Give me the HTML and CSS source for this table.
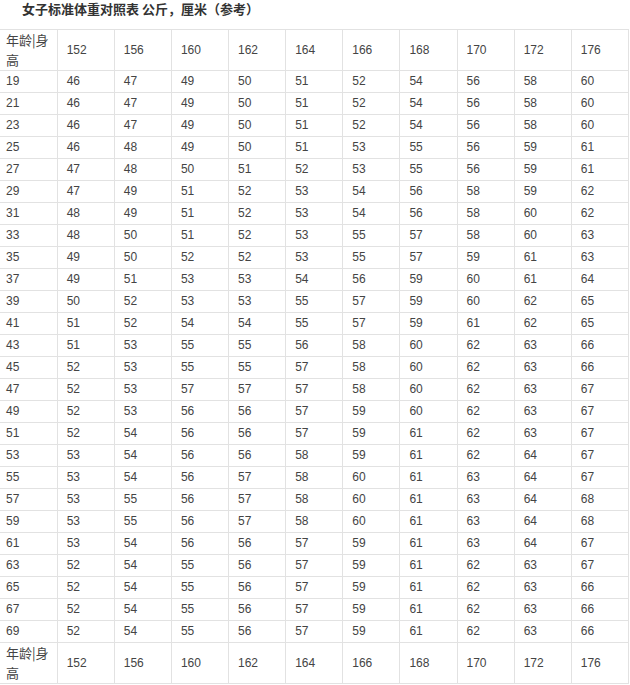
FILE: index.html
```html
<!DOCTYPE html>
<html lang="zh-CN">
<head>
<meta charset="utf-8">
<title>女子标准体重对照表</title>
<link rel="stylesheet" href="styles.css">
</head>
<body>
<div class="page">
<h1 class="title">女子标准体重对照表 公斤，厘米（参考）</h1>
<table class="chart">
<colgroup>
<col class="c"><col class="c"><col class="c"><col class="c"><col class="c"><col class="c"><col class="c"><col class="c"><col class="c"><col class="c"><col class="c">
</colgroup>
<thead>
<tr class="head"><td class="label">年龄|身高</td><td>152</td><td>156</td><td>160</td><td>162</td><td>164</td><td>166</td><td>168</td><td>170</td><td>172</td><td>176</td></tr>
</thead>
<tbody>
<tr><td>19</td><td>46</td><td>47</td><td>49</td><td>50</td><td>51</td><td>52</td><td>54</td><td>56</td><td>58</td><td>60</td></tr>
<tr><td>21</td><td>46</td><td>47</td><td>49</td><td>50</td><td>51</td><td>52</td><td>54</td><td>56</td><td>58</td><td>60</td></tr>
<tr><td>23</td><td>46</td><td>47</td><td>49</td><td>50</td><td>51</td><td>52</td><td>54</td><td>56</td><td>58</td><td>60</td></tr>
<tr><td>25</td><td>46</td><td>48</td><td>49</td><td>50</td><td>51</td><td>53</td><td>55</td><td>56</td><td>59</td><td>61</td></tr>
<tr><td>27</td><td>47</td><td>48</td><td>50</td><td>51</td><td>52</td><td>53</td><td>55</td><td>56</td><td>59</td><td>61</td></tr>
<tr><td>29</td><td>47</td><td>49</td><td>51</td><td>52</td><td>53</td><td>54</td><td>56</td><td>58</td><td>59</td><td>62</td></tr>
<tr><td>31</td><td>48</td><td>49</td><td>51</td><td>52</td><td>53</td><td>54</td><td>56</td><td>58</td><td>60</td><td>62</td></tr>
<tr><td>33</td><td>48</td><td>50</td><td>51</td><td>52</td><td>53</td><td>55</td><td>57</td><td>58</td><td>60</td><td>63</td></tr>
<tr><td>35</td><td>49</td><td>50</td><td>52</td><td>52</td><td>53</td><td>55</td><td>57</td><td>59</td><td>61</td><td>63</td></tr>
<tr><td>37</td><td>49</td><td>51</td><td>53</td><td>53</td><td>54</td><td>56</td><td>59</td><td>60</td><td>61</td><td>64</td></tr>
<tr><td>39</td><td>50</td><td>52</td><td>53</td><td>53</td><td>55</td><td>57</td><td>59</td><td>60</td><td>62</td><td>65</td></tr>
<tr><td>41</td><td>51</td><td>52</td><td>54</td><td>54</td><td>55</td><td>57</td><td>59</td><td>61</td><td>62</td><td>65</td></tr>
<tr><td>43</td><td>51</td><td>53</td><td>55</td><td>55</td><td>56</td><td>58</td><td>60</td><td>62</td><td>63</td><td>66</td></tr>
<tr><td>45</td><td>52</td><td>53</td><td>55</td><td>55</td><td>57</td><td>58</td><td>60</td><td>62</td><td>63</td><td>66</td></tr>
<tr><td>47</td><td>52</td><td>53</td><td>57</td><td>57</td><td>57</td><td>58</td><td>60</td><td>62</td><td>63</td><td>67</td></tr>
<tr><td>49</td><td>52</td><td>53</td><td>56</td><td>56</td><td>57</td><td>59</td><td>60</td><td>62</td><td>63</td><td>67</td></tr>
<tr><td>51</td><td>52</td><td>54</td><td>56</td><td>56</td><td>57</td><td>59</td><td>61</td><td>62</td><td>63</td><td>67</td></tr>
<tr><td>53</td><td>53</td><td>54</td><td>56</td><td>56</td><td>58</td><td>59</td><td>61</td><td>62</td><td>64</td><td>67</td></tr>
<tr><td>55</td><td>53</td><td>54</td><td>56</td><td>57</td><td>58</td><td>60</td><td>61</td><td>63</td><td>64</td><td>67</td></tr>
<tr><td>57</td><td>53</td><td>55</td><td>56</td><td>57</td><td>58</td><td>60</td><td>61</td><td>63</td><td>64</td><td>68</td></tr>
<tr><td>59</td><td>53</td><td>55</td><td>56</td><td>57</td><td>58</td><td>60</td><td>61</td><td>63</td><td>64</td><td>68</td></tr>
<tr><td>61</td><td>53</td><td>54</td><td>56</td><td>56</td><td>57</td><td>59</td><td>61</td><td>63</td><td>64</td><td>67</td></tr>
<tr><td>63</td><td>52</td><td>54</td><td>55</td><td>56</td><td>57</td><td>59</td><td>61</td><td>62</td><td>63</td><td>67</td></tr>
<tr><td>65</td><td>52</td><td>54</td><td>55</td><td>56</td><td>57</td><td>59</td><td>61</td><td>62</td><td>63</td><td>66</td></tr>
<tr><td>67</td><td>52</td><td>54</td><td>55</td><td>56</td><td>57</td><td>59</td><td>61</td><td>62</td><td>63</td><td>66</td></tr>
<tr><td>69</td><td>52</td><td>54</td><td>55</td><td>56</td><td>57</td><td>59</td><td>61</td><td>62</td><td>63</td><td>66</td></tr>
</tbody>
<tfoot>
<tr class="foot"><td class="label">年龄|身高</td><td>152</td><td>156</td><td>160</td><td>162</td><td>164</td><td>166</td><td>168</td><td>170</td><td>172</td><td>176</td></tr>
</tfoot>
</table>
</div>
</body>
</html>
```

FILE: styles.css
```css
html, body {
  margin: 0;
  padding: 0;
  background: #ffffff;
}

.page {
  font-family: "Liberation Sans", Arial, "Noto Sans CJK SC", sans-serif;
  color: #444444;
}

.title {
  margin: 0;
  padding: 1px 0 0 22px;
  height: 28px;
  font-size: 13px;
  line-height: 16px;
  font-weight: bold;
  color: #333333;
  font-family: "Noto Sans CJK SC", "Liberation Sans", sans-serif;
}

.chart {
  border-collapse: collapse;
  table-layout: fixed;
  width: 629px;
}

.chart .c {
  width: 57px;
}

.chart td {
  border: 1px solid #e2e2e2;
  padding: 0 4px 0 9px;
  height: 21px;
  font-size: 12px;
  line-height: 21px;
  vertical-align: middle;
  text-align: left;
  overflow: hidden;
}

.chart td:first-child {
  border-left: 0;
  padding-left: 6px;
}

.chart .head td,
.chart .foot td {
  height: 40px;
}

.chart .label {
  font-family: "Noto Sans CJK SC", sans-serif;
  font-size: 13px;
  line-height: 20px;
  padding-right: 8px;
  word-break: break-all;
}
```
